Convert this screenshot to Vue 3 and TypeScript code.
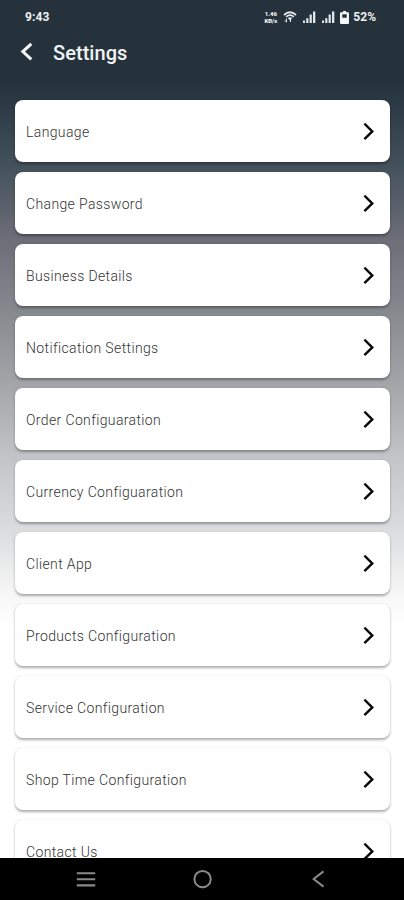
<script setup lang="ts">
const items: string[] = [
  'Language',
  'Change Password',
  'Business Details',
  'Notification Settings',
  'Order Configuaration',
  'Currency Configuaration',
  'Client App',
  'Products Configuration',
  'Service Configuration',
  'Shop Time Configuration',
  'Contact Us',
]
const signals: number[] = [1, 2]
</script>

<template>
  <div class="screen">
    <div class="status">
      <span class="clock">9:43</span>
      <div class="tray">
        <span class="speed"><span>1.46</span><span>KB/s</span></span>
        <svg class="wifi" width="14" height="12" viewBox="0 0 14 12">
          <path d="M1 4Q7 -1.5 13 4M3.2 5.8Q7 2.5 10.8 5.8" fill="none" stroke="#e9edef" stroke-width="1.7" />
          <path d="M4.8 7Q7 5.5 9.2 7L7 9.4Z" fill="#e9edef" />
          <path d="M3.4 7.5V11M1.9 9.6L3.4 11.2M7.5 11V8" fill="none" stroke="#e9edef" stroke-width="1" />
        </svg>
        <svg v-for="s in signals" :key="s" class="signal" width="13" height="12" viewBox="0 0 13 12">
          <path d="M0 9.5H2V12H0ZM3.2 7.2H5.4V12H3.2ZM6.6 3.5H8.8V12H6.6ZM10 0.5H12.3V12H10Z" fill="#e3e7e9" />
        </svg>
        <svg class="battery" width="9" height="13" viewBox="0 0 9 13">
          <path d="M3 0H6V1.3H8Q9 1.3 9 2.3V12Q9 13 8 13H1Q0 13 0 12V2.3Q0 1.3 1 1.3H3ZM2.3 3.2V6.8H6.7V3.2Z" fill="#f4f6f7" fill-rule="evenodd" />
        </svg>
        <span class="percent">52%</span>
      </div>
    </div>
    <header class="header">
      <svg width="14" height="20" viewBox="0 0 14 20">
        <path d="M12.3 1.8L3.8 9.6L12.3 17.4" fill="none" stroke="#f5f7f8" stroke-width="3" />
      </svg>
      <h1>Settings</h1>
    </header>
    <main class="list">
      <div v-for="item in items" :key="item" class="card">
        <span>{{ item }}</span>
        <svg width="12" height="20" viewBox="0 0 12 20">
          <path d="M1.4 1.7L9.3 9.4L1.4 17.1" fill="none" stroke="#080808" stroke-width="2.4" />
        </svg>
      </div>
    </main>
    <nav class="nav">
      <svg width="20" height="18" viewBox="0 0 20 18">
        <path d="M0.8 3.2H19.2M0.8 9.3H19.2M0.8 15.4H19.2" fill="none" stroke="#8a8a8a" stroke-width="2.1" />
      </svg>
      <svg width="20" height="20" viewBox="0 0 20 20">
        <circle cx="10.6" cy="10.1" r="8.2" fill="none" stroke="#8a8a8a" stroke-width="2" />
      </svg>
      <svg width="20" height="20" viewBox="0 0 20 20">
        <path d="M15.5 2.4L5.7 10L15.5 17.6" fill="none" stroke="#8a8a8a" stroke-width="2" />
      </svg>
    </nav>
  </div>
</template>

<style>
body {
  margin: 0;
  overflow: hidden;
}
</style>

<style scoped>
.screen {
  display: flex;
  flex-direction: column;
  width: 404px;
  height: 900px;
  overflow: hidden;
  font-family: Roboto, "Liberation Sans", sans-serif;
  background: linear-gradient(
    #26323b 0,
    #26323b 80px,
    #2b3a44 105px,
    #43515b 165px,
    #6b6d77 237px,
    #85898e 310px,
    #a2a4a8 382px,
    #c2c3c6 455px,
    #dadbdd 527px,
    #f8f8f8 597px,
    #fff 630px
  );
}

.status {
  display: flex;
  flex: none;
  align-items: center;
  justify-content: space-between;
  box-sizing: border-box;
  height: 34px;
  padding: 0 28px 0 25px;
  color: #eef1f2;
}

.clock {
  font-size: 12px;
  font-weight: 700;
  letter-spacing: 0.1px;
}

.tray {
  display: flex;
  align-items: center;
}

.speed {
  display: flex;
  flex-direction: column;
  align-items: center;
  width: 15px;
  font-size: 6px;
  font-weight: 900;
  line-height: 7px;
}

.wifi {
  margin-left: 5px;
}

.signal {
  margin-left: 6px;
}

.battery {
  margin-left: 5px;
}

.percent {
  margin-left: 4px;
  font-size: 12px;
  font-weight: 700;
}

.header {
  display: flex;
  flex: none;
  align-items: center;
  height: 36px;
  padding-left: 19px;
}

.header h1 {
  margin: 0 0 0 20px;
  padding-top: 1px;
  color: #f1f4f5;
  font-size: 20px;
  font-weight: 500;
  letter-spacing: 0.05px;
}

.list {
  display: flex;
  flex: 1;
  flex-direction: column;
  gap: 10px;
  min-height: 0;
  padding: 30px 14px 0 15px;
  overflow: hidden;
}

.card {
  display: flex;
  flex: none;
  align-items: center;
  justify-content: space-between;
  box-sizing: border-box;
  height: 62px;
  padding: 1px 15px 0 11px;
  border-radius: 8px;
  background: #fff;
  box-shadow: 0 1.5px 2.5px rgba(0, 0, 0, 0.32);
  color: #333;
  font-size: 14px;
  font-weight: 300;
  letter-spacing: 0.37px;
}

.nav {
  display: flex;
  flex: none;
  align-items: center;
  justify-content: space-between;
  height: 42px;
  padding: 0 76px;
  background: #000;
}
</style>
